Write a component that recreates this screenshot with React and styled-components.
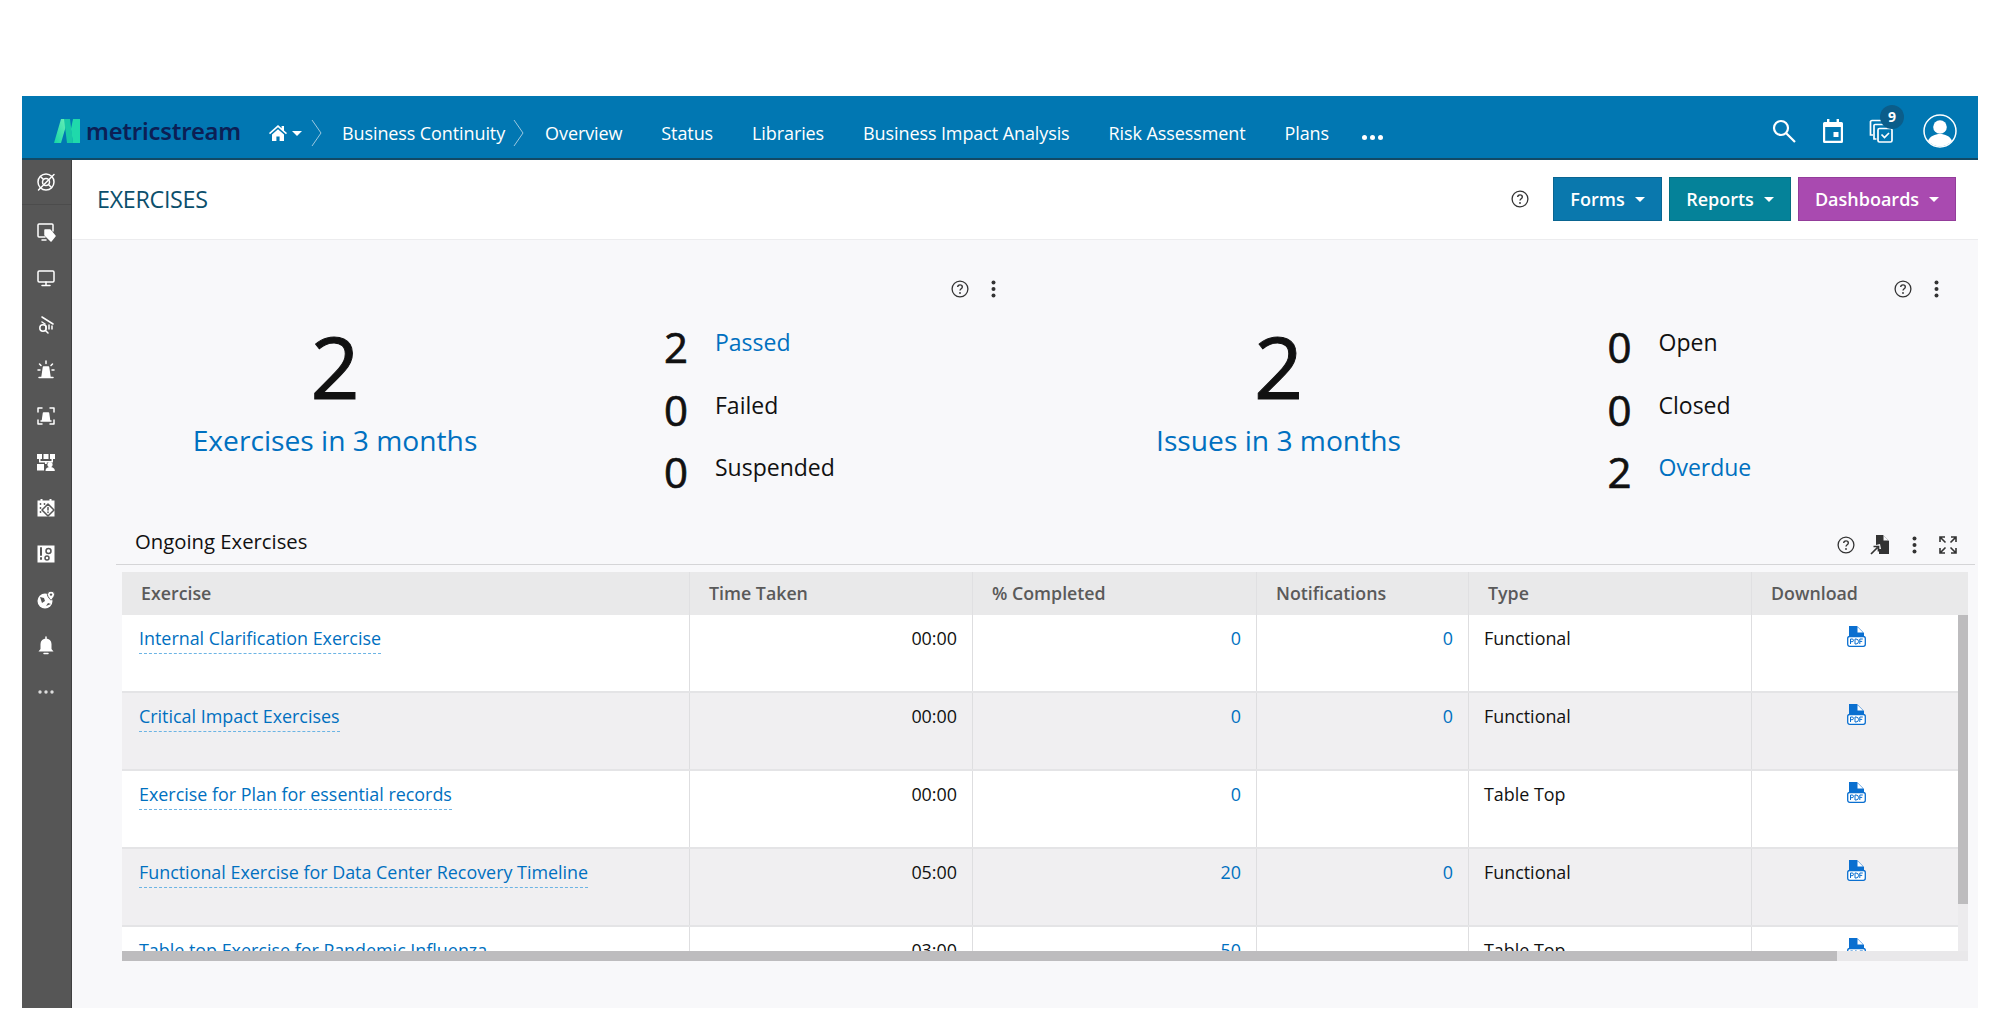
import React from "react";
import styled, { createGlobalStyle } from "styled-components";

const Global = createGlobalStyle`
  html, body { margin: 0; padding: 0; background: #fff; }
  body { font-family: "Open Sans", "Noto Sans", sans-serif; color: #111; }
  * { box-sizing: border-box; }
`;

const Frame = styled.div`
  width: 1956px;
  height: 912px;
  margin: 96px 0 0 22px;
  display: flex;
  flex-direction: column;
  overflow: hidden;
`;

const TopBar = styled.header`
  height: 64px;
  flex: none;
  background: #0177b2;
  border-bottom: 2px solid #124a66;
  display: flex;
  align-items: center;
  padding: 12px 21px 0 32px;
  color: #fff;
  font-size: 18px;
`;

const Logo = styled.div`
  display: flex;
  align-items: center;
  gap: 6px;
  width: 215px;
  color: #0c1f55;
  font-family: "Noto Sans", sans-serif;
  font-weight: 600;
  font-size: 23.8px;
  letter-spacing: -0.2px;
  margin-top: -4px;
`;

const HomeGroup = styled.div`
  display: flex;
  align-items: center;
  gap: 5px;
  width: 42px;
  margin-top: -2px;
`;

const Crumb = styled.svg`
  width: 11px;
  height: 28px;
  flex: none;
  margin-left: ${p => p.$gap || 0}px;
`;

const NavLink = styled.a`
  color: #fff;
  white-space: nowrap;
  margin-left: ${p => p.$gap}px;
  letter-spacing: -0.1px;
`;

const More = styled.span`
  margin-left: 33px;
  margin-top: 8px;
  display: flex;
  gap: 3px;
  i {
    width: 5px;
    height: 5px;
    border-radius: 50%;
    background: #fff;
  }
`;

const TopIcons = styled.div`
  margin-left: auto;
  margin-top: -4px;
  display: flex;
  align-items: center;
`;

const TopIcon = styled.div`
  position: relative;
  width: ${p => p.$size || 24}px;
  height: ${p => p.$size || 24}px;
  margin-left: ${p => p.$gap || 0}px;
  svg { display: block; }
`;

const Badge = styled.span`
  position: absolute;
  top: -14px;
  left: 11px;
  width: 24px;
  height: 24px;
  border-radius: 50%;
  background: #0b5d8a;
  font-size: 14px;
  font-weight: 700;
  line-height: 23px;
  text-align: center;
`;

const Body = styled.div`
  flex: 1;
  display: flex;
  min-height: 0;
`;

const Sidebar = styled.aside`
  width: 50px;
  flex: none;
  background: #565656;
  border-right: 1px solid #3f3f3f;
  display: flex;
  flex-direction: column;
  align-items: stretch;
`;

const SideFirst = styled.div`
  height: 45px;
  display: flex;
  align-items: center;
  justify-content: center;
  border-bottom: 1px solid #4c4c4c;
  margin-bottom: 4px;
  padding-right: 2px;
`;

const SideItem = styled.div`
  height: 46px;
  display: flex;
  align-items: center;
  justify-content: center;
  padding-right: 2px;
`;

const Main = styled.main`
  flex: 1;
  min-width: 0;
  background: #f8f8fa;
  display: flex;
  flex-direction: column;
`;

const PageHead = styled.div`
  height: 80px;
  flex: none;
  background: #fff;
  border-bottom: 1px solid #ececee;
  display: flex;
  align-items: center;
  padding: 0 22px 2px 25px;
`;

const PageTitle = styled.h1`
  margin: 0;
  font-size: 23.3px;
  font-weight: 400;
  color: #0b4f6c;
  letter-spacing: -0.3px;
`;

const HeadActions = styled.div`
  margin-left: auto;
  display: flex;
  align-items: center;
  gap: 7px;
`;

const HeadHelp = styled.div`
  margin-right: 17px;
  height: 18px;
`;

const Button = styled.button`
  height: 44px;
  width: ${p => p.$w}px;
  background: ${p => p.$bg};
  border: 1px solid ${p => p.$edge};
  color: #fff;
  font-family: inherit;
  font-size: 18px;
  font-weight: 600;
  display: flex;
  align-items: center;
  justify-content: center;
  gap: 10px;
  padding: 0;
`;

const Caret = styled.span`
  width: 0;
  height: 0;
  border-left: 5px solid transparent;
  border-right: 5px solid transparent;
  border-top: 5px solid #fff;
  margin-top: 2px;
`;

const Widgets = styled.div`
  display: grid;
  grid-template-columns: 1fr 1fr;
  column-gap: 3px;
  padding: 38px 0 0 22px;
  height: 284px;
  flex: none;
`;

const Widget = styled.section`
  display: flex;
  flex-direction: column;
`;

const Tools = styled.div`
  height: 22px;
  display: flex;
  align-items: center;
  justify-content: flex-end;
  gap: 15px;
  padding-right: ${p => p.$right || 32}px;
`;

const WidgetBody = styled.div`
  display: flex;
  margin-top: 16px;
`;

const Headline = styled.div`
  width: 482px;
  text-align: center;
`;

const BigNum = styled.div`
  font-size: 86px;
  line-height: 102px;
  margin-top: -1px;
  color: #111;
  -webkit-text-stroke: 1px #111;
`;

const BigLabel = styled.a`
  display: block;
  font-size: 28.2px;
  line-height: 40px;
  color: #0070c0;
  margin-top: 3px;
`;

const Counts = styled.div`
  margin-left: 88px;
  display: flex;
  flex-direction: column;
`;

const CountRow = styled.div`
  height: 62.5px;
  display: flex;
  align-items: center;
`;

const CountNum = styled.span`
  font-size: 42px;
  line-height: 62px;
  width: 51px;
  color: #111;
  -webkit-text-stroke: 0.7px #111;
`;

const CountLabel = styled.span`
  font-size: 23px;
  margin-top: -10px;
  color: ${p => (p.$link ? "#0070c0" : "#111")};
`;

const SectionHead = styled.div`
  flex: none;
  height: 41px;
  margin: 0 3px 0 44px;
  padding: 1px 0 0 19px;
  border-bottom: 1px solid #d5d5d7;
  display: flex;
  align-items: center;
  justify-content: space-between;
`;

const SectionTitle = styled.h2`
  margin: 0 0 7px;
  font-size: 20.3px;
  font-weight: 400;
  color: #111;
`;

const TableWrap = styled.div`
  position: relative;
  margin: 7px 0 0 50px;
  width: 1846px;
  height: 389px;
  overflow: hidden;
`;

const HeadRow = styled.div`
  display: grid;
  grid-template-columns: 567px 283px 284px 212px 283px 217px;
  height: 43px;
  background: #e9e9ea;
  color: #5a5a5a;
  font-size: 17.8px;
  font-weight: 600;
`;

const HeadCell = styled.div`
  display: flex;
  align-items: center;
  padding: 0 0 2px 19px;
  border-left: ${p => (p.$first ? "none" : "1px solid #e0e0e2")};
`;

const Row = styled.div`
  display: grid;
  grid-template-columns: 567px 283px 284px 212px 283px 207px;
  width: 1836px;
  height: 78px;
  background: ${p => (p.$odd ? "#f0eff1" : "#fff")};
  border-bottom: 2px solid #e4e4e6;
  font-size: 17.9px;
`;

const Cell = styled.div`
  padding: 11px 15px 0 17px;
  line-height: 24px;
  text-align: ${p => p.$align || "left"};
  color: ${p => p.$color || "#111"};
  border-left: ${p => (p.$first ? "none" : "1px solid #dedee0")};
`;

const TypeCell = styled(Cell)`
  padding-left: 15px;
`;

const RowLink = styled.a`
  color: #0070c0;
  border-bottom: 1px dashed #6cb4e4;
  padding-bottom: 3px;
  display: inline-block;
  line-height: 24px;
`;

const PdfCell = styled(Cell)`
  padding: 11px 0 0 2px;
  display: flex;
  justify-content: center;
  align-items: flex-start;
`;

const HTrack = styled.div`
  position: absolute;
  left: 0;
  right: 0;
  bottom: 0;
  height: 10px;
  background: #e9e8ea;
`;

const HThumb = styled.div`
  width: 1715px;
  height: 100%;
  background: #bdbcbe;
`;

const VTrack = styled.div`
  position: absolute;
  top: 43px;
  right: 0;
  bottom: 0;
  width: 10px;
  background: #ecebed;
`;

const VThumb = styled.div`
  height: 289px;
  background: #bdbcbe;
`;

const Help = () => (
  <svg width="18" height="18" viewBox="0 0 18 18" fill="none" stroke="#333">
    <circle cx="9" cy="9" r="7.9" strokeWidth="1.3" />
    <path d="M6.7 7.1c0-1.4 1-2.2 2.3-2.2s2.3.8 2.3 2c0 1.9-2.3 1.8-2.3 3.7" strokeWidth="1.4" />
    <circle cx="9" cy="13" r=".9" fill="#333" stroke="none" />
  </svg>
);

const Kebab = () => (
  <svg width="19" height="18" viewBox="0 0 19 18" fill="#333">
    <circle cx="9.500" cy="2.500" r="2" />
    <circle cx="9.500" cy="9" r="2" />
    <circle cx="9.500" cy="15.500" r="2" />
  </svg>
);

const ExportDoc = () => (
  <svg width="20" height="20" viewBox="0 0 20 20" fill="#333">
    <path d="M6 0h7l6 6v13H9v-5l2 0-1-5-4 1z" />
    <path d="M13.500 0.500 18.500 5.500h-5z" fill="#f8f8fa" />
    <path d="M1 19l6.500-6.500M3.500 11.500h5v5" fill="none" stroke="#333" strokeWidth="1.700" />
  </svg>
);

const Expand = () => (
  <svg width="18" height="18" viewBox="0 0 18 18" fill="none" stroke="#333" strokeWidth="1.600">
    <path d="M1 6V1h5M1 1l5.500 5.500M12 1h5v5M17 1l-5.500 5.500M1 12v5h5M1 17l5.500-5.500M17 12v5h-5M17 17l-5.500-5.500" />
  </svg>
);

const Pdf = () => (
  <svg width="19" height="21" viewBox="0 0 19 21">
    <path d="M2 0h8l7 7v3H2z" fill="#0a6fd0" />
    <path d="M10.500 1 16 6.500h-5.500z" fill="#fff" />
    <rect x=".7" y="10.500" width="17.600" height="9.800" rx="2" fill="#fff" stroke="#0a6fd0" strokeWidth="1.300" />
    <path d="M3.500 18v-5h1.600a1.300 1.300 0 0 1 0 2.700H3.500M8 13v5h1a2.300 2.300 0 0 0 0-5zM12.800 18v-5h3M12.800 15.400h2.400" fill="none" stroke="#0a6fd0" strokeWidth="1" />
  </svg>
);

const LogoMark = () => (
  <svg width="26" height="24" viewBox="0 0 26 24">
    <defs>
      <linearGradient id="lg" x1="0" y1="1" x2="1" y2="0">
        <stop offset="0" stopColor="#14d6a5" />
        <stop offset="1" stopColor="#6ff0b8" />
      </linearGradient>
    </defs>
    <path d="M7 0h7L7 24H0z" fill="url(#lg)" />
    <path d="M10 0h6l3 24h-6z" fill="#17c8a6" />
    <path d="M19 0h7v24h-7L17 10z" fill="#1fd9ab" />
  </svg>
);

const W = ({ children }) => (
  <svg width="20" height="20" viewBox="0 0 20 20" fill="none" stroke="#fff" strokeWidth="1.500" strokeLinecap="round" strokeLinejoin="round">
    {children}
  </svg>
);

const OrgIcon = () => (
  <svg width="20" height="20" viewBox="0 0 20 20" fill="#fff">
    <rect x="1" y="2" width="5" height="5" />
    <rect x="7.500" y="2" width="5" height="5" />
    <rect x="14" y="2" width="5" height="5" />
    <path d="M3 7h1.500v2h11V7H17v3.500h-6.200V12H9v-1.500H3z" />
    <rect x="1" y="12" width="7" height="6.500" />
    <circle cx="14" cy="12.500" r="2.600" />
    <path d="M9.500 19c0-3 2-4 4.500-4s4.800 1 4.800 4z" />
  </svg>
);

const sideIcons = [
  <W><circle cx="10" cy="10" r="8" /><circle cx="10" cy="10" r="3.500" /><path d="M2.500 18 18 2.500M4.500 4.500l3 3M12.500 12.500l3 3" /></W>,
  <W><path d="M9 15H3a1 1 0 0 1-1-1V3a1 1 0 0 1 1-1h13a1 1 0 0 1 1 1v6" /><path d="M6 18h4" /><path d="M9 8h5l5 6-4 5-6-6z" fill="#fff" /></W>,
  <W><rect x="2" y="3" width="16" height="11" rx="1.200" /><path d="M10 14v3M6 17.500h8" /></W>,
  <W><circle cx="7" cy="14" r="3.200" /><path d="M9.500 16.500 12 19M6 3l11 7M10 12v3M13 11v4M16 12v3M6 8l3 2" /></W>,
  <W><path d="M6 17 7.500 7h5L14 17zM3 17.500h14" fill="#fff" /><path d="M10 1v2.500M3.500 4 5 5.500M16.500 4 15 5.500M2 10h2M16 10h2" /></W>,
  <W><path d="M2 6V2h4M14 2h4v4M2 14v4h4M14 18h4v-4" /><path d="M6.500 14 7.500 7h5l1 7zM5 15h10" fill="#fff" /></W>,
  <OrgIcon />,
  <W><path d="M1.500 2.500h3V1h2v1.500h7V1h2v1.500h3v16h-17z" fill="#fff" stroke="none" /><path d="M12 6l6 6-6 6-6-6z" fill="#fff" stroke="#565656" /><circle cx="4.500" cy="6" r=".9" fill="#565656" stroke="none" /><circle cx="4.500" cy="10" r=".9" fill="#565656" stroke="none" /><circle cx="4.500" cy="14" r=".9" fill="#565656" stroke="none" /><circle cx="8.500" cy="6" r=".9" fill="#565656" stroke="none" /><path d="M12 9.500v2.500M12 14v.5" stroke="#565656" /></W>,
  <W><rect x="1.500" y="1.500" width="17" height="17" fill="#fff" stroke="none" /><path d="M5 4v7M5 14v1" stroke="#565656" strokeWidth="2" /><circle cx="12.500" cy="7" r="2.500" stroke="#565656" /><circle cx="11" cy="14" r="2" stroke="#565656" /></W>,
  <W><circle cx="9" cy="11" r="7.500" fill="#fff" stroke="none" /><path d="M4 7l4 1 1 3-3 2zM10 16l2-3 3 1z" fill="#565656" stroke="none" /><path d="M15 1a3.600 3.600 0 0 1 3.600 3.600c0 2.200-3.600 5.600-3.600 5.600s-3.600-3.400-3.600-5.600A3.600 3.600 0 0 1 15 1z" fill="#fff" stroke="#565656" strokeWidth="1" /><circle cx="15" cy="4.600" r="1.200" fill="#565656" stroke="none" /></W>,
  <W><path d="M10 2.500a5.500 5.500 0 0 1 5.500 5.500v5l2 2.500h-15l2-2.500V8A5.500 5.500 0 0 1 10 2.500z" fill="#fff" stroke="none" /><path d="M8 17.500h4" /><path d="M10 1v1.500" /></W>,
];

const rows = [
  { name: "Internal Clarification Exercise", time: "00:00", pct: "0", notif: "0", type: "Functional" },
  { name: "Critical Impact Exercises", time: "00:00", pct: "0", notif: "0", type: "Functional" },
  { name: "Exercise for Plan for essential records", time: "00:00", pct: "0", notif: "", type: "Table Top" },
  { name: "Functional Exercise for Data Center Recovery Timeline", time: "05:00", pct: "20", notif: "0", type: "Functional" },
  { name: "Table top Exercise for Pandemic Influenza", time: "03:00", pct: "50", notif: "", type: "Table Top" },
];

const columns = ["Exercise", "Time Taken", "% Completed", "Notifications", "Type", "Download"];

const navItems = ["Status", "Libraries", "Business Impact Analysis", "Risk Assessment", "Plans"];

const StatWidget = ({ total, label, counts }) => (
  <Widget>
    <Tools>
      <Help />
      <Kebab />
    </Tools>
    <WidgetBody>
      <Headline>
        <BigNum>{total}</BigNum>
        <BigLabel>{label}</BigLabel>
      </Headline>
      <Counts>
        {counts.map(c => (
          <CountRow key={c.label}>
            <CountNum>{c.n}</CountNum>
            <CountLabel $link={c.link}>{c.label}</CountLabel>
          </CountRow>
        ))}
      </Counts>
    </WidgetBody>
  </Widget>
);

export default function App() {
  return (
    <>
      <Global />
      <Frame>
        <TopBar>
          <Logo>
            <LogoMark />
            <span>metricstream</span>
          </Logo>
          <HomeGroup>
            <svg width="18" height="17" viewBox="0 0 18 17" fill="#fff">
              <path d="M9 1 0 9l1 1.200 8-7 8 7L18 9l-3-2.600V2h-2.400v2.300z" />
              <path d="M3 10.500 9 5.200l6 5.300V17h-4.400v-4.500H7.400V17H3z" />
            </svg>
            <Caret />
          </HomeGroup>
          <Crumb viewBox="0 0 11 28" fill="none" stroke="#9cc8e0" strokeWidth="1">
            <path d="M1 1l9 13-9 13" />
          </Crumb>
          <NavLink $gap={20}>Business Continuity</NavLink>
          <Crumb $gap={8} viewBox="0 0 11 28" fill="none" stroke="#9cc8e0" strokeWidth="1">
            <path d="M1 1l9 13-9 13" />
          </Crumb>
          <NavLink $gap={21}>Overview</NavLink>
          {navItems.map(t => (
            <NavLink key={t} $gap={39}>{t}</NavLink>
          ))}
          <More><i /><i /><i /></More>
          <TopIcons>
            <TopIcon>
              <svg width="24" height="24" viewBox="0 0 24 24" fill="none" stroke="#fff" strokeWidth="2.200">
                <circle cx="9" cy="9" r="7" />
                <path d="M14 14l9 9" />
              </svg>
            </TopIcon>
            <TopIcon $gap={25}>
              <svg width="24" height="24" viewBox="0 0 24 24" fill="#fff">
                <path d="M6 0h2.400v3h7.200V0H18v3h2.500A1.500 1.500 0 0 1 22 4.500v18a1.500 1.500 0 0 1-1.500 1.500h-17A1.500 1.500 0 0 1 2 22.500v-18A1.500 1.500 0 0 1 3.500 3H6zM4.200 8v13.800h15.600V8z" />
                <rect x="12.500" y="13" width="5" height="5" />
              </svg>
            </TopIcon>
            <TopIcon $gap={24}>
              <svg width="24" height="24" viewBox="0 0 24 24" fill="none" stroke="#fff" strokeWidth="1.700">
                <path d="M4 16H1.500V2.500a1.500 1.500 0 0 1 1.500-1h11v3" />
                <path d="M7.500 20H5V6.500a1 1 0 0 1 1-1h12v3" />
                <rect x="9" y="9.500" width="14" height="13.500" rx="1.500" />
                <path d="M12.500 15.500l3 3 4.500-4.500" />
              </svg>
              <Badge>9</Badge>
            </TopIcon>
            <TopIcon $gap={30} $size={34}>
              <svg width="34" height="34" viewBox="0 0 34 34">
                <circle cx="17" cy="17" r="16" fill="none" stroke="#fff" strokeWidth="1.500" />
                <circle cx="17" cy="13" r="6.800" fill="#fff" />
                <path d="M5 27c2-5 7-7 12-7s10 2 12 7a16 16 0 0 1-24 0z" fill="#fff" />
              </svg>
            </TopIcon>
          </TopIcons>
        </TopBar>
        <Body>
          <Sidebar>
            <SideFirst>{sideIcons[0]}</SideFirst>
            {sideIcons.slice(1).map((icon, i) => (
              <SideItem key={i}>{icon}</SideItem>
            ))}
            <SideItem>
              <svg width="16" height="4" viewBox="0 0 16 4" fill="#ddd">
                <circle cx="2" cy="2" r="1.700" />
                <circle cx="8" cy="2" r="1.700" />
                <circle cx="14" cy="2" r="1.700" />
              </svg>
            </SideItem>
          </Sidebar>
          <Main>
            <PageHead>
              <PageTitle>EXERCISES</PageTitle>
              <HeadActions>
                <HeadHelp><Help /></HeadHelp>
                <Button $w={109} $bg="#0a78ad" $edge="#0a6591">Forms <Caret /></Button>
                <Button $w={122} $bg="#058299" $edge="#056f82">Reports <Caret /></Button>
                <Button $w={158} $bg="#a94ab0" $edge="#933d9a">Dashboards <Caret /></Button>
              </HeadActions>
            </PageHead>
            <Widgets>
              <StatWidget
                total="2"
                label="Exercises in 3 months"
                counts={[
                  { n: 2, label: "Passed", link: true },
                  { n: 0, label: "Failed" },
                  { n: 0, label: "Suspended" },
                ]}
              />
              <StatWidget
                total="2"
                label="Issues in 3 months"
                counts={[
                  { n: 0, label: "Open" },
                  { n: 0, label: "Closed" },
                  { n: 2, label: "Overdue", link: true },
                ]}
              />
            </Widgets>
            <SectionHead>
              <SectionTitle>Ongoing Exercises</SectionTitle>
              <Tools $right={18}>
                <Help />
                <ExportDoc />
                <Kebab />
                <Expand />
              </Tools>
            </SectionHead>
            <TableWrap>
              <HeadRow>
                {columns.map((c, i) => (
                  <HeadCell key={c} $first={i === 0}>{c}</HeadCell>
                ))}
              </HeadRow>
              {rows.map((r, i) => (
                <Row key={r.name} $odd={i % 2 === 1}>
                  <Cell $first><RowLink>{r.name}</RowLink></Cell>
                  <Cell $align="right">{r.time}</Cell>
                  <Cell $align="right" $color="#0070c0">{r.pct}</Cell>
                  <Cell $align="right" $color="#0070c0">{r.notif}</Cell>
                  <TypeCell>{r.type}</TypeCell>
                  <PdfCell><Pdf /></PdfCell>
                </Row>
              ))}
              <VTrack><VThumb /></VTrack>
              <HTrack><HThumb /></HTrack>
            </TableWrap>
          </Main>
        </Body>
      </Frame>
    </>
  );
}
